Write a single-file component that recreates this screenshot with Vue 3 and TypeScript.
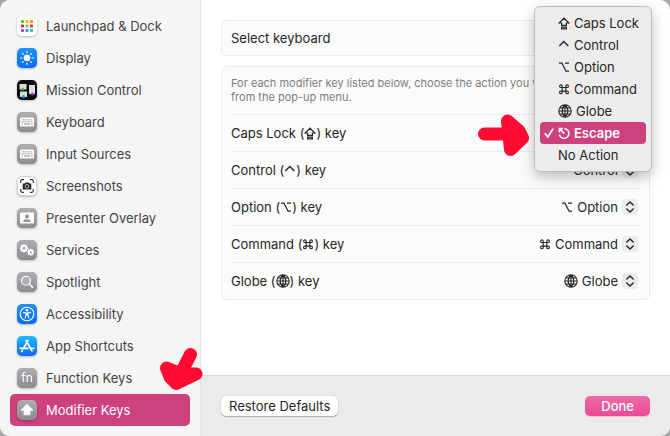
<script setup lang="ts">
import { ref } from 'vue'

type Glyph = 'caps' | 'control' | 'option' | 'command' | 'globe' | 'escape' | 'none'

interface Action {
  id: Glyph
  label: string
}

interface KeyRow {
  id: Glyph
  name: string
  value: Glyph
}

const glyphs: Record<Glyph, string> = {
  caps: 'M6 1.2 L11 6 H8.4 V8.4 H3.6 V6 H1 Z M3.6 10.2 H8.4 V11.8 H3.6 Z',
  control: 'M1.3 7 L5.8 2.6 L10.3 7',
  option: 'M1 2.2 H4 L8 10.2 H11 M7 2.2 H11',
  command:
    'M4.2 4.5 H7.8 V8.1 H4.2 Z M4.2 4.5 H2.9 A1.3 1.3 0 1 1 4.2 3.2 Z M7.8 4.5 V3.2 A1.3 1.3 0 1 1 9.1 4.5 Z M7.8 8.1 H9.1 A1.3 1.3 0 1 1 7.8 9.4 Z M4.2 8.1 V9.4 A1.3 1.3 0 1 1 2.9 8.1 Z',
  globe:
    'M7 .8 A6.2 6.2 0 1 1 7 13.2 A6.2 6.2 0 1 1 7 .8 Z M7 1 V13 M1 7 H13 M2.2 4 H11.8 M2.2 10 H11.8 M7 1 C3.2 4 3.2 10 7 13 M7 1 C10.8 4 10.8 10 7 13',
  escape: 'M6.4 1.7 A4.8 4.8 0 1 1 1.4 7.6 M6.4 6.6 L1.8 2 M1.4 5.4 V1.6 H5',
  none: '',
}

const actions: Action[] = [
  { id: 'caps', label: 'Caps Lock' },
  { id: 'control', label: 'Control' },
  { id: 'option', label: 'Option' },
  { id: 'command', label: 'Command' },
  { id: 'globe', label: 'Globe' },
  { id: 'escape', label: 'Escape' },
  { id: 'none', label: 'No Action' },
]

const rows = ref<KeyRow[]>([
  { id: 'caps', name: 'Caps Lock', value: 'escape' },
  { id: 'control', name: 'Control', value: 'control' },
  { id: 'option', name: 'Option', value: 'option' },
  { id: 'command', name: 'Command', value: 'command' },
  { id: 'globe', name: 'Globe', value: 'globe' },
])

const sections = [
  'Launchpad & Dock',
  'Display',
  'Mission Control',
  'Keyboard',
  'Input Sources',
  'Screenshots',
  'Presenter Overlay',
  'Services',
  'Spotlight',
  'Accessibility',
  'App Shortcuts',
  'Function Keys',
  'Modifier Keys',
]
const current = ref('Modifier Keys')

const dots = ['#3fd03f', '#ffb400', '#ff8a00', '#f0282d', '#a8a8a8', '#f0282d', '#a34bd6', '#1f9bff', '#2fc7b0']
const rays = [0, 45, 90, 135, 180, 225, 270, 315]
const teeth = [0, 45, 90, 135]

function box(id: Glyph): string {
  return id === 'globe' ? '0 0 14 14' : '0 0 12 13'
}

function choose(id: Glyph): void {
  rows.value[0].value = id
}

function restore(): void {
  rows.value.forEach((row) => (row.value = row.id))
}
</script>

<template>
  <div class="desktop">
    <div class="window">
      <nav class="sidebar">
        <button
          v-for="name in sections"
          :key="name"
          class="item"
          :class="{ active: name === current }"
          @click="current = name"
        >
          <svg class="app-icon" viewBox="0 0 20 20" aria-hidden="true">
            <defs>
              <linearGradient id="grey" x2="0" y2="1">
                <stop stop-color="#aeaeb2" />
                <stop offset="1" stop-color="#8b8b90" />
              </linearGradient>
              <linearGradient id="blue" x2="0" y2="1">
                <stop stop-color="#2191ff" />
                <stop offset="1" stop-color="#0a6cf5" />
              </linearGradient>
              <linearGradient id="sky" x2="0" y2="1">
                <stop stop-color="#18bcfb" />
                <stop offset="1" stop-color="#1767ee" />
              </linearGradient>
            </defs>
            <g v-if="name === 'Launchpad & Dock'">
              <rect width="20" height="20" rx="5" fill="#fff" />
              <rect
                v-for="(dot, i) in dots"
                :key="i"
                :x="4 + (i % 3) * 4.5"
                :y="4 + Math.floor(i / 3) * 4.5"
                width="3"
                height="3"
                rx="0.8"
                :fill="dot"
              />
            </g>
            <g v-else-if="name === 'Display'">
              <rect width="20" height="20" rx="5" fill="url(#blue)" />
              <circle cx="10" cy="10" r="3.3" fill="#fff" />
              <path
                v-for="ray in rays"
                :key="ray"
                d="M10 3.6V4.8"
                stroke="#fff"
                stroke-width="1.1"
                stroke-linecap="round"
                :transform="`rotate(${ray} 10 10)`"
              />
            </g>
            <g v-else-if="name === 'Mission Control'">
              <rect width="20" height="20" rx="5" fill="#0b0b0b" />
              <rect x="2.5" y="4" width="7" height="5.5" fill="#dcdcdc" />
              <rect x="12" y="5" width="6" height="9" fill="#dcdcdc" />
              <rect x="3" y="11.5" width="7" height="5.5" fill="#dcdcdc" />
              <circle cx="5.7" cy="9" r="1.5" fill="#3ed61f" />
              <circle cx="15.3" cy="14" r="1.6" fill="#9a35dc" />
              <circle cx="6.4" cy="16.6" r="1.6" fill="#1d9bff" />
            </g>
            <g v-else-if="name === 'Keyboard' || name === 'Input Sources'">
              <rect width="20" height="20" rx="5" fill="url(#grey)" />
              <rect x="3" y="5.5" width="14" height="9" rx="1" fill="#fff" />
              <path d="M4.5 7.8H15.5M4.5 9.8H15.5" stroke="#c4c4c7" stroke-width="1.4" stroke-dasharray="1.3 .3" />
              <path d="M4.5 12H6M7 12H13M14 12H15.5" stroke="#b4b4b8" stroke-width="1.3" />
            </g>
            <g v-else-if="name === 'Screenshots'">
              <rect x=".5" y=".5" width="19" height="19" rx="4.5" fill="#fff" stroke="#d2d2d2" />
              <path
                d="M3.7 7V5.2Q3.7 3.7 5.2 3.7H7M13 3.7H14.8Q16.3 3.7 16.3 5.2V7M16.3 13V14.8Q16.3 16.3 14.8 16.3H13M7 16.3H5.2Q3.7 16.3 3.7 14.8V13"
                fill="none"
                stroke="#333"
                stroke-width="1.2"
              />
              <path d="M5.7 7.5H7.6L8.5 6.4H11.5L12.4 7.5H14.3V13.4H5.7Z" fill="#252525" />
              <circle cx="10" cy="10.3" r="1.8" fill="none" stroke="#ddd" stroke-width=".8" />
            </g>
            <g v-else-if="name === 'Presenter Overlay'">
              <rect width="20" height="20" rx="5" fill="url(#grey)" />
              <rect x="3" y="4.5" width="14" height="11" rx="1.2" fill="#fff" />
              <circle cx="10" cy="8.4" r="2.1" fill="#98989c" />
              <path d="M6 14C6 11.9 7.6 11.3 10 11.3S14 11.9 14 14Z" fill="#98989c" />
            </g>
            <g v-else-if="name === 'Services'">
              <rect width="20" height="20" rx="5" fill="url(#grey)" />
              <g fill="none" stroke="#fff">
                <circle cx="7" cy="8.2" r="2.4" stroke-width="1.9" />
                <path
                  v-for="t in teeth"
                  :key="t"
                  d="M7 4V5.6M7 10.8V12.4"
                  stroke-width="1.6"
                  :transform="`rotate(${t} 7 8.2)`"
                />
                <circle cx="13.7" cy="12.2" r="1.9" stroke-width="1.7" />
                <path
                  v-for="t in teeth"
                  :key="t + 1"
                  d="M13.7 8.7V10M13.7 14.4V15.7"
                  stroke-width="1.4"
                  :transform="`rotate(${t} 13.7 12.2)`"
                />
              </g>
            </g>
            <g v-else-if="name === 'Spotlight'">
              <rect width="20" height="20" rx="5" fill="url(#grey)" />
              <circle cx="9" cy="8.7" r="4.5" fill="#b0b0b3" stroke="#fff" stroke-width="1.1" />
              <path d="M12.3 12L15.5 15.3" stroke="#fff" stroke-width="1.6" stroke-linecap="round" />
            </g>
            <g v-else-if="name === 'Accessibility'">
              <rect width="20" height="20" rx="5" fill="url(#blue)" />
              <circle cx="10" cy="10" r="6.8" fill="none" stroke="#fff" stroke-width="1.1" />
              <circle cx="10" cy="6.3" r="1.2" fill="#fff" />
              <path
                d="M6.3 8.5L9 9.1M13.7 8.5L11 9.1M9.2 10.8L8.2 14.2M10.8 10.8L11.8 14.2"
                fill="none"
                stroke="#fff"
                stroke-width="1.1"
                stroke-linecap="round"
              />
              <path d="M8.6 8.5H11.4V11.6H8.6Z" fill="#fff" />
            </g>
            <g v-else-if="name === 'App Shortcuts'">
              <rect width="20" height="20" rx="5" fill="url(#sky)" />
              <path
                d="M11.2 4.4L6.2 12.9M9 4.4L14.9 14.8M3.2 12.3H11M14 12.3H16.8M5.2 14.8L4.8 15.4"
                fill="none"
                stroke="#fff"
                stroke-width="1.7"
                stroke-linecap="round"
              />
            </g>
            <g v-else-if="name === 'Function Keys'">
              <rect width="20" height="20" rx="5" fill="url(#grey)" />
              <text x="10" y="13.7" text-anchor="middle" font-size="12" fill="#fff">fn</text>
            </g>
            <g v-else>
              <rect width="20" height="20" rx="5" fill="url(#grey)" />
              <path
                d="M10 4.2L16 10.2H13V14.8H7V10.2H4Z"
                fill="#fff"
                stroke="#fff"
                stroke-width=".8"
                stroke-linejoin="round"
              />
            </g>
          </svg>
          <span>{{ name }}</span>
        </button>
      </nav>

      <main class="content">
        <div class="panes">
          <section class="card single">Select keyboard</section>

          <section class="card">
            <p class="hint">
              For each modifier key listed below, choose the action you want it to perform from the pop-up menu.
            </p>
            <div v-for="row in rows" :key="row.id" class="row">
              <label class="key-name" :for="`key-${row.id}`">
                {{ row.name }} (<svg class="glyph" :class="row.id" :viewBox="box(row.id)" aria-hidden="true">
                  <path :d="glyphs[row.id]" /></svg>) key
              </label>
              <div class="picker">
                <svg
                  v-if="row.value !== 'none'"
                  class="glyph"
                  :class="row.value"
                  :viewBox="box(row.value)"
                  aria-hidden="true"
                >
                  <path :d="glyphs[row.value]" />
                </svg>
                <select :id="`key-${row.id}`" v-model="row.value">
                  <option v-for="a in actions" :key="a.id" :value="a.id">{{ a.label }}</option>
                </select>
                <svg class="stepper" viewBox="0 0 16 16" aria-hidden="true">
                  <rect width="16" height="16" rx="4" />
                  <path d="M4.8 6L8 3L11.2 6M4.8 10L8 13L11.2 10" />
                </svg>
              </div>
              <div v-if="row.id === 'caps'" class="menu" role="menu">
                <button
                  v-for="a in actions"
                  :key="a.id"
                  class="choice"
                  :class="{ checked: row.value === a.id }"
                  role="menuitemradio"
                  :aria-checked="row.value === a.id"
                  @click="choose(a.id)"
                >
                  <svg class="tick" viewBox="0 0 10 12" aria-hidden="true">
                    <path v-if="row.value === a.id" d="M1.3 6.8L3.8 10L8.7 2.3" />
                  </svg>
                  <svg v-if="a.id !== 'none'" class="glyph" :class="a.id" :viewBox="box(a.id)" aria-hidden="true">
                    <path :d="glyphs[a.id]" />
                  </svg>
                  <span>{{ a.label }}</span>
                </button>
              </div>
            </div>
          </section>
        </div>

        <footer class="footer">
          <button class="push" @click="restore">Restore Defaults</button>
          <button class="push primary">Done</button>
        </footer>
      </main>
    </div>

    <svg class="marker to-menu" viewBox="0 0 52 44" aria-hidden="true">
      <path d="M6.5 21H40" />
      <path d="M29.5 8L41 18L44.5 25L32.5 36.5Z" class="solid" />
    </svg>
    <svg class="marker to-item" viewBox="0 0 44 44" aria-hidden="true">
      <path d="M31.5 7.5L20 30" />
      <path d="M7.5 21L11 30L17.3 36.5L37 27L22 27Z" class="solid" />
    </svg>
  </div>
</template>

<style>
body {
  margin: 0;
}
</style>

<style scoped>
* {
  box-sizing: border-box;
}

.desktop {
  position: relative;
  min-height: 100vh;
  display: flex;
  overflow: hidden;
  background: #a9a9a9;
  color: #262626;
  font: 13px/16px Inter, 'Liberation Sans', sans-serif;
}

button,
select {
  margin: 0;
  border: 0;
  font: inherit;
  color: inherit;
}

.window {
  flex: 1;
  display: flex;
  overflow: hidden;
  border-radius: 10px;
  background: #fff;
}

.sidebar {
  flex: 0 0 201px;
  display: flex;
  flex-direction: column;
  padding: 10px;
  background: #f5f5f5;
  border-right: 1px solid #e4e4e4;
}

.item {
  display: flex;
  align-items: center;
  gap: 9px;
  height: 32px;
  padding: 0 7px;
  border-radius: 5px;
  background: none;
  color: #444;
  text-align: left;
}

.item.active {
  background: #cd417f;
  color: #fff;
}

.app-icon {
  width: 20px;
  height: 20px;
  filter: drop-shadow(0 1px 1px rgb(0 0 0 / 25%));
}

.content {
  flex: 1;
  min-width: 0;
  display: flex;
  flex-direction: column;
}

.panes {
  flex: 1;
  display: flex;
  flex-direction: column;
  gap: 10px;
  padding: 20px;
}

.card {
  padding: 0 9px;
  border: 1px solid #ebebeb;
  border-radius: 6px;
  background: #fbfbfb;
}

.single {
  padding: 9px;
}

.hint {
  margin: 0;
  padding: 9px 0 10px;
  color: #7d7d7d;
  font-size: 11px;
  line-height: 14px;
}

.row {
  position: relative;
  display: flex;
  align-items: center;
  justify-content: space-between;
  height: 37px;
  border-top: 1px solid #ebebeb;
}

.glyph {
  flex: none;
  width: 12px;
  height: 13px;
  fill: none;
  stroke: currentColor;
  stroke-width: 1.2;
  vertical-align: -2px;
}

.glyph.control {
  stroke-width: 1.4;
}

.glyph.command {
  stroke-width: 1.1;
}

.glyph.globe {
  width: 14px;
  height: 14px;
  stroke-width: 1.1;
}

.glyph.escape {
  stroke-width: 1.6;
}

.picker {
  display: flex;
  align-items: center;
  gap: 4px;
  padding-right: 2px;
}

select {
  appearance: none;
  field-sizing: content;
  padding: 0;
  background: none;
}

.stepper {
  width: 16px;
  height: 16px;
}

.stepper rect {
  fill: #ebebeb;
}

.stepper path {
  fill: none;
  stroke: #262626;
  stroke-width: 1.5;
  stroke-linecap: round;
  stroke-linejoin: round;
}

.menu {
  position: absolute;
  right: -12px;
  bottom: -21px;
  z-index: 1;
  width: 118px;
  padding: 5px;
  border: 1px solid #bdbdbd;
  border-radius: 6px;
  background: #ececec;
  box-shadow: 0 5px 14px rgb(0 0 0 / 25%);
}

.choice {
  display: flex;
  align-items: center;
  gap: 4px;
  width: 100%;
  height: 22px;
  padding: 0 4px;
  border-radius: 4px;
  background: none;
  white-space: nowrap;
}

.choice.checked {
  background: #cd417f;
  color: #fff;
  font-weight: 600;
}

.tick {
  flex: none;
  width: 10px;
  height: 12px;
  fill: none;
  stroke: currentColor;
  stroke-width: 1.8;
  stroke-linecap: round;
  stroke-linejoin: round;
}

.footer {
  display: flex;
  align-items: center;
  justify-content: space-between;
  height: 61px;
  padding: 0 20px;
  border-top: 1px solid #dadada;
  background: #ebebeb;
}

.push {
  height: 20px;
  padding: 0 8px;
  border-radius: 5px;
  background: #fff;
  box-shadow: 0 0 1px rgb(0 0 0 / 30%), 0 1px 1px rgb(0 0 0 / 25%);
}

.push.primary {
  padding: 0 16px;
  background: linear-gradient(#f06aa8, #e94b94);
  color: #fff;
  font-weight: 500;
  box-shadow: 0 1px 1px rgb(233 75 148 / 30%);
}

.marker {
  position: absolute;
  z-index: 2;
  fill: none;
  stroke: #ff0a30;
  stroke-width: 13;
  stroke-linecap: round;
  stroke-linejoin: round;
  pointer-events: none;
}

.marker .solid {
  fill: #ff0a30;
}

.to-menu {
  left: 478px;
  top: 113px;
  width: 52px;
  height: 44px;
}

.to-item {
  left: 159px;
  top: 347px;
  width: 44px;
  height: 44px;
}
</style>
